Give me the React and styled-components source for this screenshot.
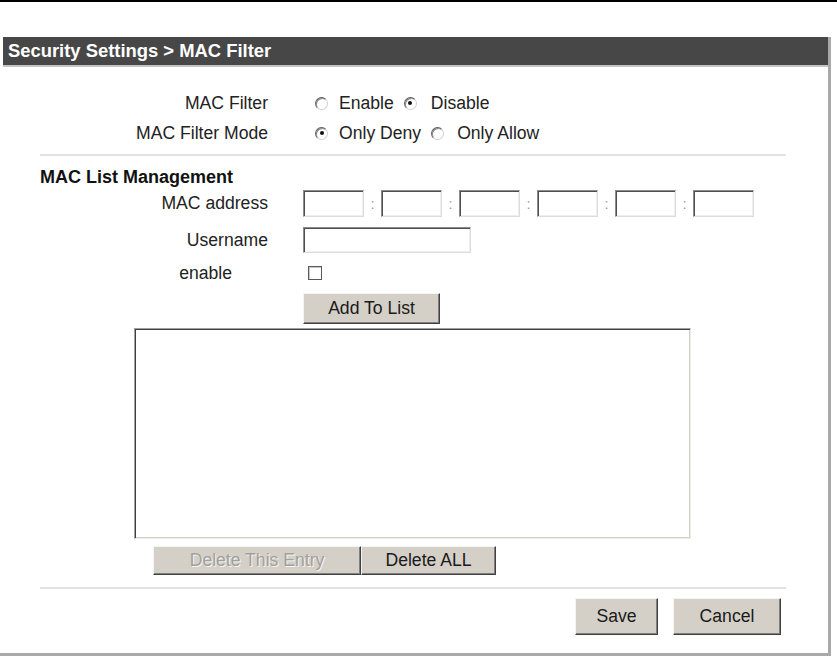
import React from "react";
import styled, { createGlobalStyle } from "styled-components";

const GlobalStyle = createGlobalStyle`
  html, body {
    margin: 0;
    padding: 0;
    background: #ffffff;
  }
  body {
    font-family: "Liberation Sans", Arial, sans-serif;
    font-size: 17.6px;
    color: #222;
  }
`;

const TopRule = styled.div`
  height: 2px;
  background: #000;
`;

const Panel = styled.div`
  margin-top: 35px;
  width: 828px;
  height: 616px;
  border-right: 3px solid #a9a9a9;
  border-bottom: 3px solid #a9a9a9;
  display: flex;
  flex-direction: column;
`;

const Header = styled.div`
  margin-left: 3px;
  height: 28px;
  line-height: 28px;
  padding-left: 5px;
  background: #474747;
  border-bottom: 2px solid #c4c4c4;
  color: #fff;
  font-weight: 700;
  font-size: 18.4px;
`;

const Body = styled.div`
  padding: 21px 42px 0 40px;
  display: flex;
  flex-direction: column;
`;

const Row = styled.div`
  display: grid;
  grid-template-columns: 228px 1fr;
  column-gap: 35px;
  align-items: center;
  height: ${(p) => p.$h || 30}px;
  margin-top: ${(p) => p.$mt || 0}px;
`;

const Label = styled.div`
  text-align: right;
  padding-right: ${(p) => p.$pr || 0}px;
  color: #222;
  white-space: nowrap;
`;

const Controls = styled.div`
  display: flex;
  align-items: center;
  gap: ${(p) => p.$gap || 0}px;
  padding-left: ${(p) => p.$pl || 0}px;
`;

const Choice = styled.label`
  display: inline-flex;
  align-items: center;
  gap: ${(p) => p.$gap || 12}px;
  color: #222;
`;

const RadioMark = styled.span`
  position: relative;
  width: 11px;
  height: 11px;
  border-radius: 50%;
  border: 1px solid;
  border-color: #5e5e5e #cfcfcf #cfcfcf #5e5e5e;
  background: #fff;
  box-shadow: inset 1px 1px 0 #8a8a8a;
  &::after {
    content: "";
    display: ${(p) => (p.$on ? "block" : "none")};
    position: absolute;
    left: 3.5px;
    top: 3.5px;
    width: 4px;
    height: 4px;
    border-radius: 50%;
    background: #111;
  }
`;

const Rule = styled.div`
  height: 2px;
  background: #e2e2e2;
  margin-top: ${(p) => p.$mt || 0}px;
`;

const SectionTitle = styled.div`
  font-weight: 700;
  font-size: 18px;
  color: #111;
  height: 22px;
  line-height: 22px;
  margin-top: 10px;
`;

const TextBox = styled.div`
  box-sizing: border-box;
  width: ${(p) => p.$w}px;
  height: ${(p) => p.$h || 27}px;
  background: #fff;
  border: 1px solid;
  border-color: #8c8c8c #dcdcdc #dcdcdc #8c8c8c;
  box-shadow: inset 1px 1px 0 #4e4e4e, inset -1px -1px 0 #eeeeee;
`;

const Colon = styled.span`
  width: 17px;
  text-align: center;
  font-size: 15px;
  color: #a89c80;
`;

const Check = styled.span`
  box-sizing: border-box;
  width: 14px;
  height: 14px;
  margin-left: 5px;
  background: #fff;
  border: 1px solid #5a5a5a;
  box-shadow: inset 1px 1px 0 #c8c8c8;
`;

const Button = styled.button`
  box-sizing: border-box;
  width: ${(p) => p.$w}px;
  height: ${(p) => p.$h || 31}px;
  padding: 0;
  font-family: "Liberation Sans", Arial, sans-serif;
  font-size: 17.6px;
  background: #d4d0c8;
  color: ${(p) => (p.disabled ? "#a3a09a" : "#1a1a1a")};
  text-shadow: ${(p) => (p.disabled ? "1px 1px 0 #f4f4f4" : "none")};
  border: 1px solid;
  border-color: #f4f4f4 #404040 #404040 #f4f4f4;
  box-shadow: inset -1px -1px 0 #808080;
  cursor: default;
`;

const ListBox = styled.div`
  box-sizing: border-box;
  margin: 4px 0 0 94px;
  width: 557px;
  height: 211px;
  background: #fff;
  border: 1px solid;
  border-color: #a0a0a0 #ecebe6 #ecebe6 #a0a0a0;
  box-shadow: inset 1px 1px 0 #404040, inset -1px -1px 0 #d4d0c8;
`;

const ButtonRow = styled.div`
  display: flex;
  justify-content: ${(p) => p.$justify || "flex-start"};
  gap: ${(p) => p.$gap || 0}px;
  margin-top: ${(p) => p.$mt || 0}px;
  padding-left: ${(p) => p.$pl || 0}px;
  padding-right: ${(p) => p.$pr || 0}px;
`;

const Radio = ({ on, gap, children }) => (
  <Choice $gap={gap}>
    <RadioMark $on={on} />
    {children}
  </Choice>
);

export default function App() {
  const octets = [0, 1, 2, 3, 4, 5];
  return (
    <>
      <GlobalStyle />
      <TopRule />
      <Panel>
        <Header>Security Settings &gt; MAC Filter</Header>
        <Body>
          <Row>
            <Label>MAC Filter</Label>
            <Controls $pl={12} $gap={10}>
              <Radio gap={11}>Enable</Radio>
              <Radio on gap={14}>Disable</Radio>
            </Controls>
          </Row>
          <Row>
            <Label>MAC Filter Mode</Label>
            <Controls $pl={12} $gap={10}>
              <Radio on gap={11}>Only Deny</Radio>
              <Radio gap={13}>Only Allow</Radio>
            </Controls>
          </Row>
          <Rule $mt={6} />

          <SectionTitle>MAC List Management</SectionTitle>
          <Row $h={27} $mt={2}>
            <Label>MAC address</Label>
            <Controls>
              {octets.map((i) => (
                <React.Fragment key={i}>
                  {i > 0 && <Colon>:</Colon>}
                  <TextBox $w={61} />
                </React.Fragment>
              ))}
            </Controls>
          </Row>
          <Row $h={26} $mt={10}>
            <Label>Username</Label>
            <Controls>
              <TextBox $w={168} $h={26} />
            </Controls>
          </Row>
          <Row $h={26} $mt={7}>
            <Label $pr={36}>enable</Label>
            <Controls>
              <Check />
            </Controls>
          </Row>
          <Row $h={31} $mt={7}>
            <span />
            <Controls>
              <Button $w={137}>Add To List</Button>
            </Controls>
          </Row>

          <ListBox />

          <ButtonRow $mt={7} $pl={113}>
            <Button $w={208} $h={29} disabled>
              Delete This Entry
            </Button>
            <Button $w={135} $h={29}>
              Delete ALL
            </Button>
          </ButtonRow>
          <Rule $mt={12} />
          <ButtonRow $mt={9} $justify="flex-end" $gap={15} $pr={5}>
            <Button $w={83} $h={37}>
              Save
            </Button>
            <Button $w={108} $h={37}>
              Cancel
            </Button>
          </ButtonRow>
        </Body>
      </Panel>
    </>
  );
}
